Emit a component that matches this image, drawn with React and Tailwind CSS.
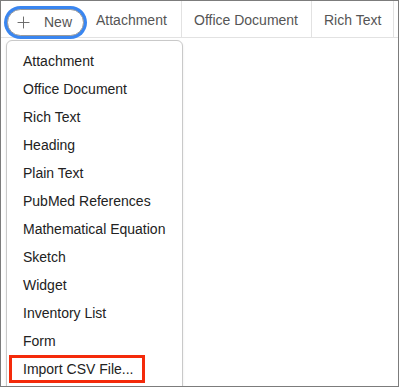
import { Plus } from "lucide-react";

const tabs = [
  { name: "Attachment", width: "w-[98px]" },
  { name: "Office Document", width: "w-[130px]" },
  { name: "Rich Text", width: "w-[82px]" },
];

const menuItems = [
  "Attachment",
  "Office Document",
  "Rich Text",
  "Heading",
  "Plain Text",
  "PubMed References",
  "Mathematical Equation",
  "Sketch",
  "Widget",
  "Inventory List",
  "Form",
  "Import CSV File...",
];

export default function App() {
  return (
    <div className="w-[400px] h-[388px] bg-white font-['Liberation_Sans',Arial,sans-serif]">
      <div className="relative w-[399px] h-[387px] border border-[#7c7c7c] overflow-hidden bg-white">
        {/* TAB BAR */}
        <div className="flex h-[37px] border-b border-[#e2e2e2]">
          <div className="w-[83px] shrink-0 pl-[6px] pt-[8px]">
            <button className="relative z-10 flex items-center gap-[11px] h-[27px] w-[77px] pl-[6px] rounded-full border border-[#9a9a9a] ring-[3px] ring-[#3a86f0] bg-white text-[14px] text-[#555]">
              <Plus size={19} strokeWidth={1.2} className="text-[#666]" />
              <span>New</span>
            </button>
          </div>
          {tabs.map((tab) => (
            <div
              key={tab.name}
              className={`${tab.width} shrink-0 flex items-center pl-[12px] pt-[2px] border-r border-[#e2e2e2] text-[14px] text-[#555] whitespace-nowrap`}
            >
              {tab.name}
            </div>
          ))}
        </div>

        {/* DROPDOWN */}
        <div className="absolute left-[5px] top-[39px] w-[177px] h-[360px] bg-white border border-[#c9c9c9] rounded-t-[6px] shadow-[0_1px_3px_rgba(0,0,0,0.08)] pt-[6px]">
          {menuItems.map((item, i) => (
            <div
              key={item}
              className="relative h-[28px] flex items-center pl-[16px] text-[14px] text-[#222] whitespace-nowrap"
            >
              {i === menuItems.length - 1 && (
                <span className="absolute left-[2px] top-0 w-[136px] h-[28px] border-[3px] border-[#f42a0a]" />
              )}
              <span className="relative">{item}</span>
            </div>
          ))}
        </div>
      </div>
    </div>
  );
}
